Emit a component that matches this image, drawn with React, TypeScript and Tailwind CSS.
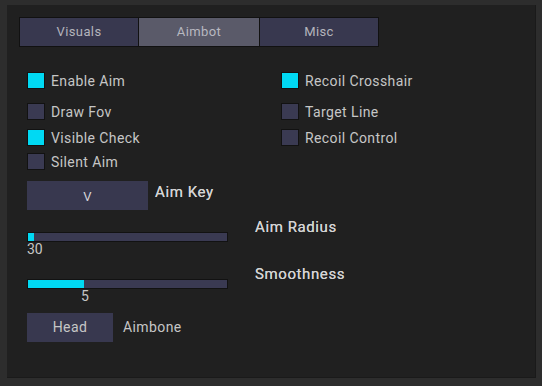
import React from "react";

const font = { fontFamily: "Roboto, 'DejaVu Sans', sans-serif" };

function Check({ on, label }: { on: boolean; label: string }) {
  return (
    <div className="flex items-center h-[17px] w-[257px]">
      <div
        className={
          "w-[18px] h-[17px] border border-[#121212] " +
          (on ? "bg-[#00d9f3]" : "bg-[#3a3a52]")
        }
      />
      <span className="ml-[6px] mt-[2px] text-[14px] leading-[17px] text-[#c6c6c6] tracking-[0.4px]">
        {label}
      </span>
    </div>
  );
}

function Slider({ fill, value, valueLeft, label }: { fill: number; value: string; valueLeft: number; label: string }) {
  return (
    <div className="flex items-start">
      <div className="w-[201px]">
        <div className="mt-[14px] h-[10px] border border-[#121212] bg-[#3a3a52] flex">
          <div className="h-full bg-[#00d9f3]" style={{ width: fill }} />
        </div>
        <div className="text-[14px] leading-[12px] mt-[1px] text-[#c6c6c6]" style={{ marginLeft: valueLeft }}>
          {value}
        </div>
      </div>
      <div className="ml-[27px] text-[15px] leading-[18px] text-[#d4d4d4] tracking-[0.6px] [text-shadow:0_0_0.4px_#d4d4d4]">
        {label}
      </div>
    </div>
  );
}

export default function App() {
  return (
    <div className="w-[542px] h-[386px] bg-[#2d2d2d] pt-[5px] pl-[7px] pr-[6px] pb-[8px]" style={font}>
      <div className="w-full h-full bg-[#202020] pt-[12px] pl-[12px] border-r border-b border-[#1a1a1a]">
        <div className="flex">
          <div className="w-[120px] h-[30px] border border-[#111] bg-[#38384f] flex items-center justify-center text-[13px] text-[#b4b4bc] tracking-[0.4px]">
            Visuals
          </div>
          <div className="w-[120px] h-[30px] border-y border-[#111] bg-[#5a5a69] flex items-center justify-center text-[13px] text-[#b8b8c0] tracking-[0.4px]">
            Aimbot
          </div>
          <div className="w-[120px] h-[30px] border border-[#111] bg-[#38384f] flex items-center justify-center text-[13px] text-[#b4b4bc] tracking-[0.4px]">
            Misc
          </div>
        </div>

        <div className="ml-[8px]">
          <div className="mt-[25px] flex">
            <Check on={true} label="Enable Aim" />
            <Check on={true} label="Recoil Crosshair" />
          </div>
          <div className="mt-[14px] flex">
            <Check on={false} label="Draw Fov" />
            <Check on={false} label="Target Line" />
          </div>
          <div className="mt-[9px] flex">
            <Check on={true} label="Visible Check" />
            <Check on={false} label="Recoil Control" />
          </div>
          <div className="mt-[7px] flex">
            <Check on={false} label="Silent Aim" />
          </div>

          <div className="mt-[11px] flex items-start">
            <div className="w-[121px] h-[29px] pt-[2px] bg-[#38384f] flex items-center justify-center text-[13px] text-[#d4d4d8]">
              V
            </div>
            <div className="ml-[7px] mt-[2px] text-[15px] leading-[18px] text-[#d4d4d4] tracking-[0.6px] [text-shadow:0_0_0.4px_#d4d4d4]">
              Aim Key
            </div>
          </div>

          <div className="mt-[8px]">
            <Slider fill={6} value="30" valueLeft={0} label="Aim Radius" />
          </div>
          <div className="mt-[10px]">
            <Slider fill={56} value="5" valueLeft={54} label="Smoothness" />
          </div>

          <div className="mt-[11px] flex items-center">
            <div className="w-[86px] h-[29px] bg-[#38384f] flex items-center justify-center text-[14px] text-[#c6c6c6] tracking-[0.4px]">
              Head
            </div>
            <div className="ml-[10px] text-[14px] text-[#c6c6c6] tracking-[0.4px]">Aimbone</div>
          </div>
        </div>
      </div>
    </div>
  );
}
